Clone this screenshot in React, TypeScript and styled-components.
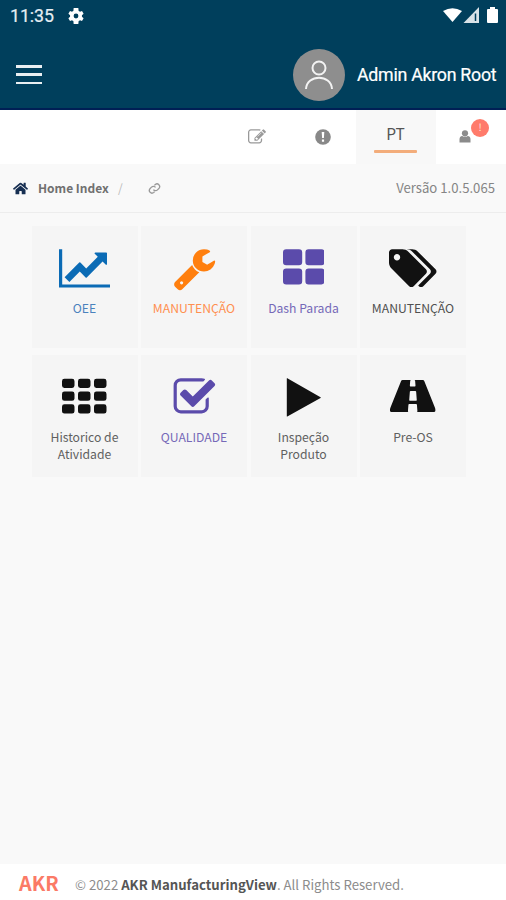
import React from "react";
import styled, { createGlobalStyle } from "styled-components";
import { FaHome } from "react-icons/fa";

const Global = createGlobalStyle`
  * { box-sizing: border-box; }
  body { margin: 0; background: #f9f9f9; }
`;

const sans = `"Noto Sans CJK JP", "Noto Sans", sans-serif`;

const Page = styled.div`
  width: 506px;
  height: 900px;
  display: flex;
  flex-direction: column;
  background: #f9f9f9;
  font-family: ${sans};
  color: #666;
`;

const Header = styled.header`
  height: 110px;
  background: #003f5c;
  border-bottom: 2px solid #001f55;
  color: #fff;
  font-family: Roboto, sans-serif;
`;

const StatusBar = styled.div`
  height: 32px;
  display: flex;
  align-items: center;
  padding: 0 7px 0 10px;
`;

const Clock = styled.span`
  font-size: 17.8px;
  line-height: 32px;
  width: 58px;
  color: #e6eef3;
  letter-spacing: -0.1px;
  -webkit-text-stroke: 0.2px #e6eef3;
`;

const StatusIcons = styled.div`
  margin-left: auto;
  display: flex;
  align-items: center;
`;

const AppBar = styled.div`
  height: 76px;
  display: flex;
  align-items: center;
  padding: 9px 9px 0 16px;
`;

const MenuButton = styled.button`
  width: 26px;
  height: 19px;
  padding: 0;
  border: 0;
  background: none;
  display: flex;
  flex-direction: column;
  justify-content: space-between;
`;

const MenuLine = styled.span`
  display: block;
  width: 26px;
  height: 2.5px;
  background: #e9eff2;
`;

const Avatar = styled.div`
  width: 52px;
  height: 52px;
  margin-left: auto;
  margin-right: 12px;
  border-radius: 50%;
  background: #8e8e8e;
  display: flex;
  justify-content: center;
  align-items: center;
`;

const UserName = styled.span`
  width: 140px;
  font-size: 17.8px;
  line-height: 24px;
  white-space: nowrap;
  letter-spacing: -0.27px;
  -webkit-text-stroke: 0.2px #fff;
`;

const NavBar = styled.nav`
  height: 54px;
  background: #fff;
  display: flex;
  justify-content: flex-end;
  color: #999;
`;

const NavItem = styled.div<{ $w: number }>`
  width: ${(p) => p.$w}px;
  display: flex;
  align-items: center;
  justify-content: center;
`;

const Language = styled.div`
  width: 80px;
  background: #f8f8f8;
  display: flex;
  flex-direction: column;
  align-items: center;
  padding: 11px 1px 0 0;
  font-size: 15.5px;
  line-height: 24px;
  color: #555;
`;

const Underline = styled.span`
  width: 43px;
  height: 3px;
  margin-top: 5px;
  border-radius: 1px;
  background: #f3ad7b;
`;

const Account = styled.div`
  position: relative;
  width: 70px;
  padding: 20px 0 0 23px;
  svg { display: block; }
`;

const Badge = styled.span`
  position: absolute;
  left: 35px;
  top: 9px;
  width: 18px;
  height: 18px;
  border-radius: 50%;
  background: #ff7b6b;
  color: #ffe2dc;
  font-size: 10px;
  line-height: 16px;
  text-align: center;
`;

const Breadcrumb = styled.div`
  height: 49px;
  border-bottom: 1px solid #ededed;
  display: flex;
  align-items: center;
  padding: 0 11px 0 13px;
  font-size: 12px;
  line-height: 20px;
  color: #777;
  svg { display: block; }
`;

const Crumb = styled.b`
  width: 80px;
  margin-left: 10px;
  color: #707070;
  white-space: nowrap;
`;

const Slash = styled.span`
  width: 30px;
  color: #bbb;
`;

const Version = styled.span`
  margin-left: auto;
  font-size: 13.15px;
  color: #858585;
`;

const Grid = styled.main`
  display: grid;
  grid-template-columns: repeat(4, 106px);
  grid-auto-rows: 122px;
  gap: 7px 3.5px;
  padding: 13px 0 0 31.5px;
  flex: 1;
  align-content: start;
`;

const Tile = styled.div<{ $color: string }>`
  background: #f5f5f5;
  color: ${(p) => p.$color};
  display: flex;
  flex-direction: column;
  align-items: center;
  padding-top: 20px;
`;

const Label = styled.span<{ $color: string }>`
  margin-top: 9px;
  font-size: 12.2px;
  line-height: 17px;
  text-align: center;
  white-space: pre-line;
  color: ${(p) => p.$color};
`;

const Footer = styled.footer`
  height: 36px;
  background: #fff;
  display: flex;
  align-items: center;
  padding: 6px 0 0 19px;
  font-size: 13.2px;
  line-height: 20px;
  color: #8c8c8c;
  white-space: nowrap;
  b { color: #555; }
`;

const Brand = styled.span`
  width: 56px;
  font-size: 19.8px;
  line-height: 24px;
  font-weight: 700;
  color: #fb7a66;
  margin-top: -4px;
`;

/* Glyphs share a 1792-unit em square and keep their own advance width. */
type GlyphProps = { d: string; units?: number; size?: number };
const Glyph = ({ d, units = 1792, size = 44.8 }: GlyphProps) => (
  <svg width={(units / 1792) * size} height={size} viewBox={`0 0 ${units} 1792`} fill="currentColor">
    <path d={d} />
  </svg>
);

const block = (x: number, y: number, w: number, h: number, r: number) =>
  `M${x + r} ${y}h${w - 2 * r}q${r} 0 ${r} ${r}v${h - 2 * r}q0 ${r} ${-r} ${r}h${-(w - 2 * r)}q${-r} 0 ${-r} ${-r}v${-(h - 2 * r)}q0 ${-r} ${r} ${-r}z`;

const lineChart =
  "M2048 1536v128h-2048v-1536h128v1408h1920zm-128-1248v435q0 21-19.5 29.5t-35.5-7.5l-121-121-633 633q-10 10-23 10t-23-10l-233-233-416 416-192-192 585-585q10-10 23-10t23 10l233 233 464-464-121-121q-16-16-7.5-35.5t29.5-19.5h435q14 0 23 9t9 23z";
const wrench =
  "M448 1472q0-26-19-45t-45-19-45 19-19 45 19 45 45 19 45-19 19-45zm644-420l-682 682q-37 37-90 37-52 0-91-37l-106-108q-38-36-38-90 0-53 38-91l681-681q39 98 114.5 173.5t173.5 114.5zm634-435q0 39-23 106-47 134-164.5 217.5t-258.5 83.5q-185 0-316.5-131.5t-131.5-316.5 131.5-316.5 316.5-131.5q58 0 121.5 16.5t107.5 46.5q16 11 16 28t-16 28l-293 169v224l193 107q5-3 79-48.5t135.5-81 70.5-35.5q15 0 23.5 10t8.5 25z";
const tags =
  "M448 448q0-53-37.5-90.5t-90.5-37.5-90.5 37.5-37.5 90.5 37.5 90.5 90.5 37.5 90.5-37.5 37.5-90.5zm1067 576q0 53-37 90l-491 492q-39 37-91 37-53 0-90-37l-715-716q-38-37-64.500-101t-26.500-117v-416q0-52 38-90t90-38h416q53 0 117 26.500t102 64.500l715 714q37 39 37 91zm384 0q0 53-37 90l-491 492q-39 37-91 37-36 0-59-14t-53-45l470-470q37-37 37-90 0-52-37-91l-715-714q-38-38-102-64.500t-117-26.500h224q53 0 117 26.500t102 64.500l715 714q37 39 37 91z";
const checkSquare =
  "M1472 930v318q0 119-84.5 203.5t-203.5 84.5h-832q-119 0-203.5-84.5t-84.5-203.5v-832q0-119 84.5-203.5t203.5-84.5h832q63 0 117 25 15 7 18 23 3 17-9 29l-49 49q-10 10-23 10-3 0-9-2-23-6-45-6h-832q-66 0-113 47t-47 113v832q0 66 47 113t113 47h832q66 0 113-47t47-113v-254q0-13 9-22l64-64q10-10 23-10 6 0 12 3 20 8 20 29zm231-489l-814 814q-24 24-57 24t-57-24l-430-430q-24-24-24-57t24-57l110-110q24-24 57-24t57 24l263 263 647-647q24-24 57-24t57 24l110 110q24 24 24 57t-24 57z";
const road =
  "M1111 1001v-4l-24-320q-1-13-11-22.5t-23-9.5h-186q-13 0-23 9.5t-11 22.5l-24 320v4q-1 12 8 20t21 8h244q12 0 21-8t8-20zm746 407q0 73-46 73h-704q13 0 22-9.5t8-22.5l-20-256q-1-13-11-22.5t-23-9.5h-272q-13 0-23 9.5t-11 22.5l-20 256q-1 13 8 22.5t22 9.5h-704q-46 0-46-73 0-54 26-116l417-1044q8-19 26-33t38-14h339q-13 0-23 9.5t-11 22.5l-15 192q-1 14 8 23t22 9h166q13 0 22-9t8-23l-15-192q-1-13-11-22.5t-23-9.5h339q20 0 38 14t26 33l417 1044q26 62 26 116z";
const pencilSquare =
  "M888 1184l116-116-152-152-116 116v56h96v96h56zm440-720q-16-16-33 1l-350 350q-17 17-1 33t33-1l350-350q17-17 1-33zm80 594v190q0 119-84.5 203.5t-203.5 84.5h-832q-119 0-203.5-84.5t-84.5-203.5v-832q0-119 84.5-203.5t203.5-84.5h832q63 0 117 25 15 7 18 23 3 17-9 29l-49 49q-14 14-32 8-23-6-45-6h-832q-66 0-113 47t-47 113v832q0 66 47 113t113 47h832q66 0 113-47t47-113v-126q0-13 9-22l64-64q15-15 35-7t20 29zm-96-738l288 288-672 672h-288v-288zm444 132l-92 92-288-288 92-92q28-28 68-28t68 28l152 152q28 28 28 68t-28 68z";
const thLarge = [0, 896].flatMap((x) => [128, 896].map((y) => block(x, y, 768, 640, 128))).join("");
const th = [0, 640, 1280].flatMap((x) => [150, 662, 1174].map((y) => block(x, y, 500, 370, 96))).join("");
const play = "M192 138v1508q0 28 20 12l1330-738q24-13 0-28L212 126q-20-14-20 12z";

const tiles = [
  { label: "OEE", d: lineChart, units: 2048, color: "#0b6bb5", text: "#4a82bd" },
  { label: "MANUTENÇÃO", d: wrench, units: 1792, color: "#ff7f0e", text: "#ff8f50" },
  { label: "Dash Parada", d: thLarge, units: 1664, color: "#5b4bab", text: "#7669b8" },
  { label: "MANUTENÇÃO", d: tags, units: 1899, color: "#111", text: "#505050" },
  { label: "Historico de\nAtividade", d: th, units: 1792, color: "#111", text: "#606060" },
  { label: "QUALIDADE", d: checkSquare, units: 1792, color: "#5b4bab", text: "#7669b8" },
  { label: "Inspeção\nProduto", d: play, units: 1760, color: "#111", text: "#606060" },
  { label: "Pre-OS", d: road, units: 1920, color: "#111", text: "#606060" },
];

export default function App() {
  return (
    <Page>
      <Global />
      <Header>
        <StatusBar>
          <Clock>11:35</Clock>
          <svg width="16" height="16" viewBox="2 2 20 20" fill="#fff">
            <path
              fillRule="evenodd"
              d="M19.4 13a7.5 7.5 0 0 0 0-2l2.1-1.7-2-3.5-2.5 1a7.6 7.6 0 0 0-1.7-1L14.9 2H9.1l-.4 3.800a7.600 7.600 0 0 0-1.700 1l-2.500-1-2 3.500L4.600 11a7.500 7.500 0 0 0 0 2l-2.100 1.700 2 3.500 2.500-1a7.600 7.600 0 0 0 1.700 1l.4 3.800h5.800l.4-3.800a7.600 7.600 0 0 0 1.700-1l2.500 1 2-3.500zM12 15a3 3 0 1 1 0-6 3 3 0 0 1 0 6z"
            />
          </svg>
          <StatusIcons>
            <svg width="56" height="18" viewBox="0 0 56 18" fill="#fff">
              <path d="M0 4Q9.500-1.500 19 4L9.500 15z" />
              <path d="M20.500 16L36 0v16z" fillOpacity=".85" />
              <path d="M32.500 6.500V14" stroke="#003f5c" strokeWidth="1.500" />
              <path d="M44 3q0-1 1-1h2V0h5v2h2q1 0 1 1v12q0 1-1 1h-9q-1 0-1-1z" />
            </svg>
          </StatusIcons>
        </StatusBar>
        <AppBar>
          <MenuButton aria-label="Menu">
            <MenuLine />
            <MenuLine />
            <MenuLine />
          </MenuButton>
          <Avatar>
            <svg width="28" height="30" viewBox="0 0 28 30" fill="none" stroke="#f3f3f3" strokeWidth="2">
              <circle cx="14" cy="8" r="6.500" />
              <path d="M1 29C2 14 26 14 27 29" />
            </svg>
          </Avatar>
          <UserName>Admin Akron Root</UserName>
        </AppBar>
      </Header>
      <NavBar>
        <NavItem $w={66}>
          <Glyph d={pencilSquare} size={18} />
        </NavItem>
        <NavItem $w={66}>
          <svg width="16" height="16" viewBox="0 0 16 16">
            <circle cx="8" cy="8" r="7.800" fill="#888" />
            <path d="M6.700 3h2.600l-.4 6H7.100zM6.900 10.500h2.200v2.200H6.900z" fill="#fff" />
          </svg>
        </NavItem>
        <Language>
          PT
          <Underline />
        </Language>
        <Account>
          <svg width="12" height="13" viewBox="0 0 12 13" fill="#8b8b8b">
            <circle cx="6" cy="3.300" r="3.100" />
            <path d="M.5 12.500V9.500Q.5 6.300 3.200 6q2.800 1.700 5.600 0 2.700.3 2.700 3.500v3z" />
          </svg>
          <Badge>!</Badge>
        </Account>
      </NavBar>
      <Breadcrumb>
        <FaHome size={15} color="#172f52" />
        <Crumb>Home Index</Crumb>
        <Slash>/</Slash>
        <svg width="13" height="13" viewBox="0 0 24 24" fill="none" stroke="#999" strokeWidth="2.400">
          <path d="M10 14a5 5 0 0 0 7.500.5l3-3a5 5 0 0 0-7-7L11.800 6.200" />
          <path d="M14 10a5 5 0 0 0-7.500-.5l-3 3a5 5 0 0 0 7 7l1.700-1.700" />
        </svg>
        <Version>Versão 1.0.5.065</Version>
      </Breadcrumb>
      <Grid>
        {tiles.map((t, i) => (
          <Tile key={i} $color={t.color}>
            <Glyph d={t.d} units={t.units} />
            <Label $color={t.text}>{t.label}</Label>
          </Tile>
        ))}
      </Grid>
      <Footer>
        <Brand>AKR</Brand>
        <span>
          © 2022 <b>AKR ManufacturingView</b>. All Rights Reserved.
        </span>
      </Footer>
    </Page>
  );
}
